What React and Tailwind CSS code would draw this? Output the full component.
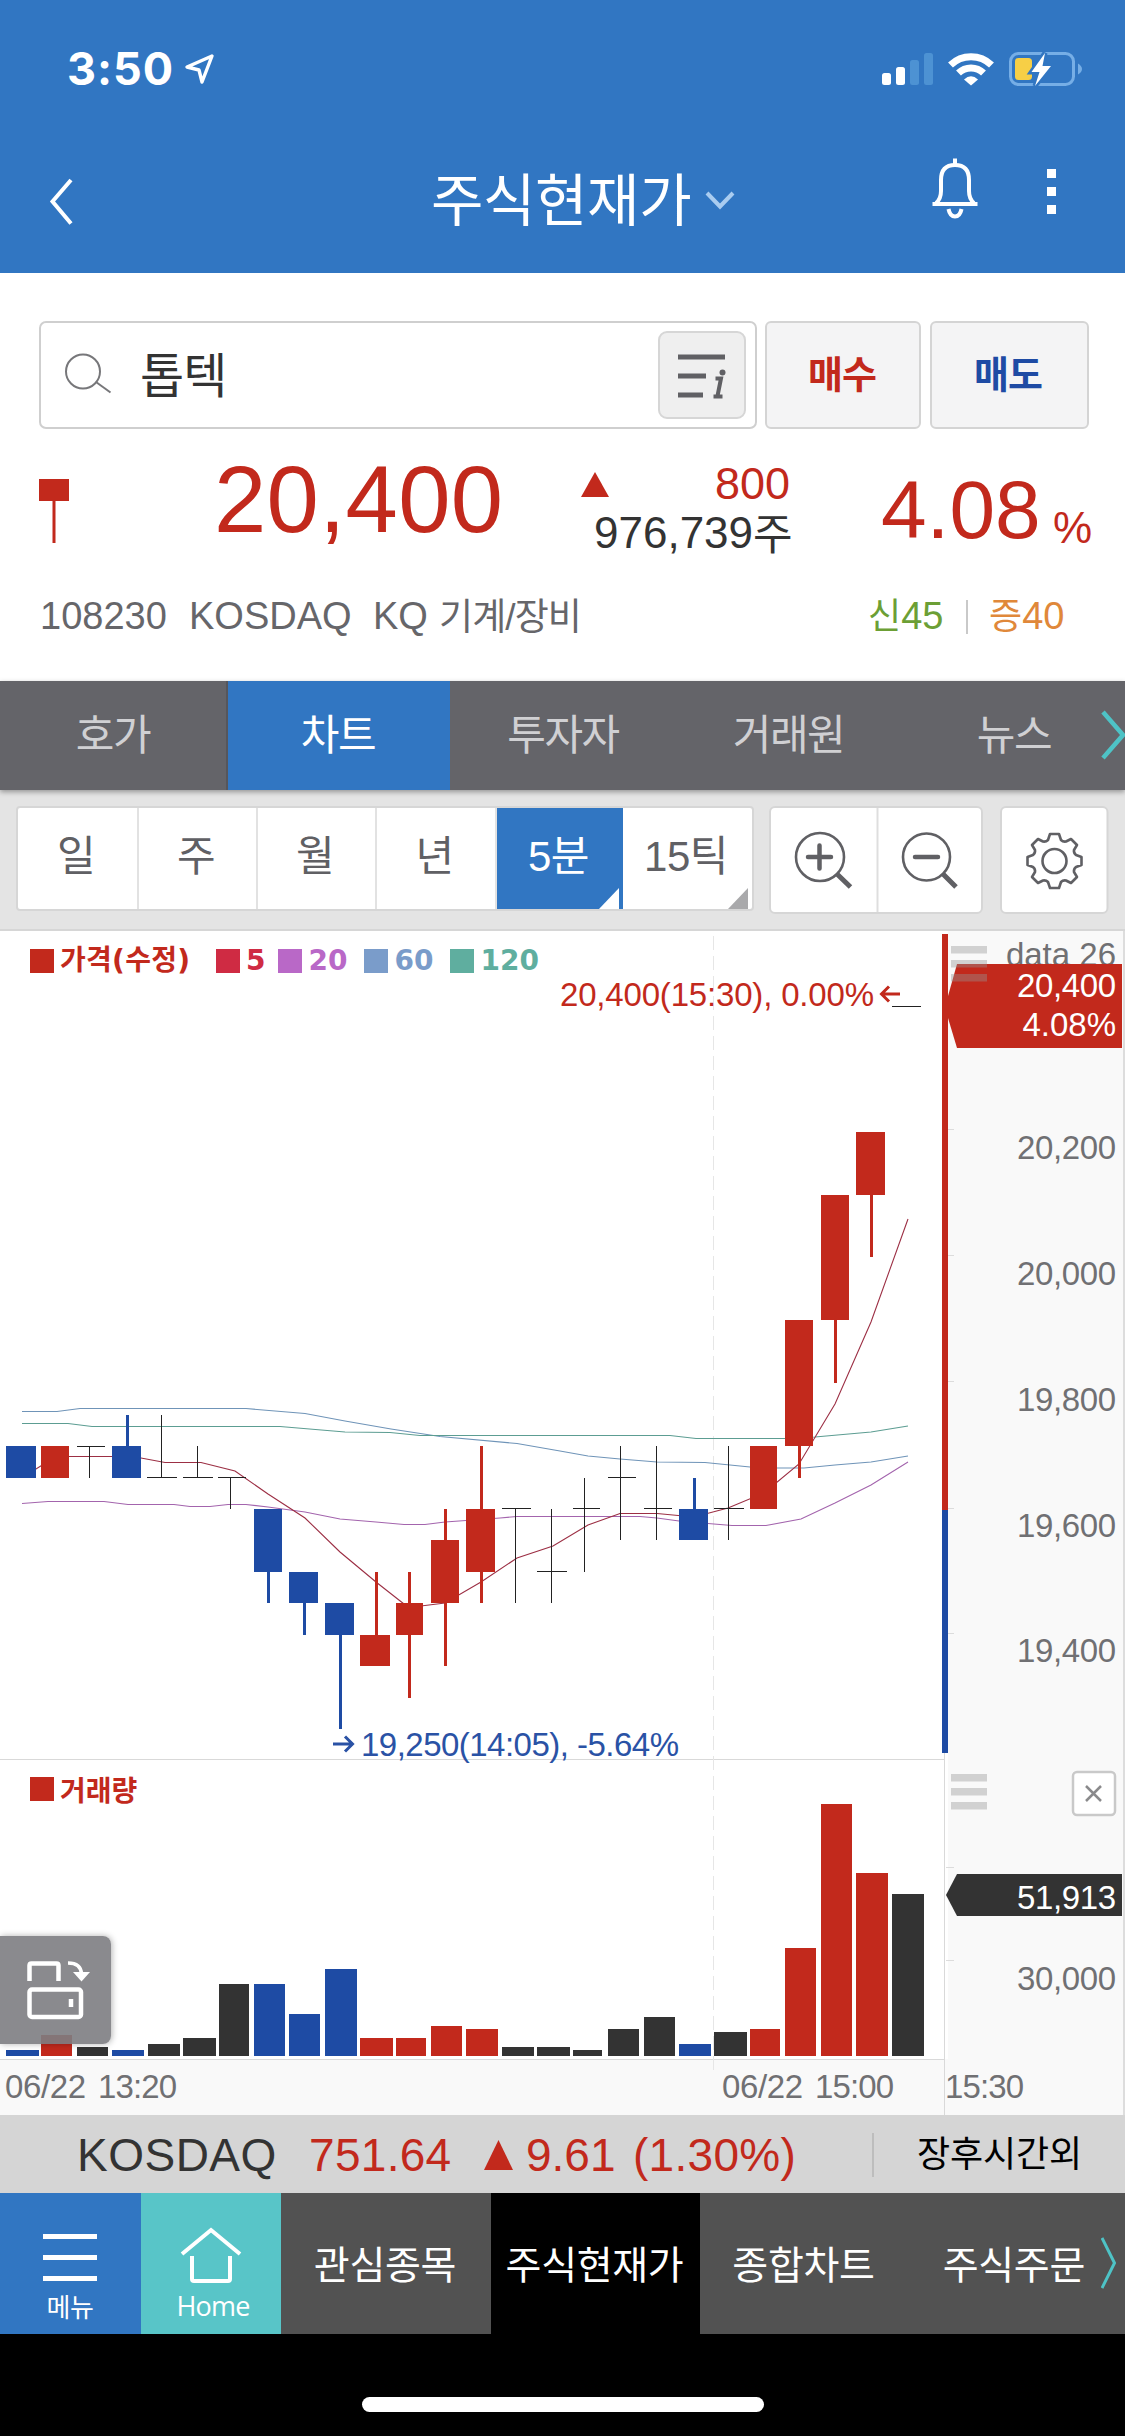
const RED = "#c2291c"
const BLUE = "#1e4ba4"
const BLACK = "#333333"

const periods = [
  { label: "일", width: "w-[121px]" },
  { label: "주", width: "w-[119px]" },
  { label: "월", width: "w-[119px]" },
  { label: "년", width: "w-[120px]" },
  { label: "5분", width: "w-[126px]", active: true },
  { label: "15틱", width: "w-[129px]", corner: true },
]

// x1, x2, body top, body bottom, wick x, wick top, wick bottom
const candles = [
  { c: BLUE, x1: 6, x2: 36, t: 1446, b: 1478 },
  { c: RED, x1: 41, x2: 69, t: 1446, b: 1478 },
  { c: BLUE, x1: 112, x2: 141, t: 1446, b: 1478, w: [127.5, 1415, 1446] },
  { c: BLUE, x1: 254, x2: 282, t: 1509, b: 1572, w: [268.5, 1572, 1603] },
  { c: BLUE, x1: 289, x2: 318, t: 1572, b: 1603, w: [304.5, 1603, 1635] },
  { c: BLUE, x1: 325, x2: 354, t: 1603, b: 1635, w: [340.5, 1635, 1729] },
  { c: RED, x1: 360, x2: 390, t: 1635, b: 1666, w: [376.5, 1572, 1635] },
  { c: RED, x1: 396, x2: 423, t: 1603, b: 1635, w: [409.5, 1572, 1698] },
  { c: RED, x1: 431, x2: 459, t: 1540, b: 1603, w: [445.5, 1509, 1666] },
  { c: RED, x1: 466, x2: 495, t: 1509, b: 1572, w: [481.5, 1446, 1603] },
  { c: BLUE, x1: 679, x2: 708, t: 1509, b: 1540, w: [694.5, 1478, 1509] },
  { c: RED, x1: 750, x2: 777, t: 1446, b: 1509 },
  { c: RED, x1: 785, x2: 813, t: 1320, b: 1446, w: [799.5, 1446, 1478] },
  { c: RED, x1: 821, x2: 849, t: 1195, b: 1320, w: [835.5, 1320, 1383] },
  { c: RED, x1: 856, x2: 885, t: 1132, b: 1195, w: [871.5, 1195, 1257] },
]

// x1, x2, y of the bar, wick x, wick top, wick bottom
const dojis = [
  [77, 105, 1446.5, 89.5, 1446, 1478],
  [147, 177, 1477.5, 161.5, 1415, 1478],
  [183, 213, 1477.5, 197.5, 1446, 1478],
  [218, 246, 1477.5, 230.5, 1477, 1509],
  [502, 531, 1508.5, 515.5, 1508, 1603],
  [537, 567, 1571.5, 551.5, 1509, 1603],
  [573, 600, 1508.5, 584.5, 1478, 1572],
  [608, 636, 1477.5, 620.5, 1446, 1540],
  [644, 672, 1508.5, 656.5, 1446, 1540],
  [714, 744, 1508.5, 728.5, 1446, 1540],
]

const volumes = [
  [6, 39, 2050, BLUE], [41, 72, 2035, RED], [77, 108, 2047, BLACK],
  [112, 144, 2050, BLUE], [148, 180, 2044, BLACK], [183, 216, 2038, BLACK],
  [219, 249, 1984, BLACK], [254, 285, 1984, BLUE], [289, 320, 2014, BLUE],
  [325, 357, 1969, BLUE], [360, 393, 2038, RED], [396, 426, 2038, RED],
  [431, 462, 2026, RED], [466, 498, 2029, RED], [502, 534, 2047, BLACK],
  [537, 570, 2047, BLACK], [573, 602, 2050, BLACK], [608, 639, 2029, BLACK],
  [644, 675, 2017, BLACK], [679, 711, 2044, BLUE], [714, 747, 2032, BLACK],
  [750, 780, 2029, RED], [785, 816, 1948, RED], [821, 852, 1804, RED],
  [856, 888, 1873, RED], [892, 924, 1894, BLACK],
]

const averages = [
  {
    color: "#6f94b8",
    points: "22,1411.5 57,1411.5 80,1408.5 246,1408.5 305,1413.5 345,1421 391,1429 440,1436.5 517,1443.5 560,1451 588,1456 620,1459 657,1462 705,1462.5 750,1467 777,1468 804,1468 835,1465 871,1462 908,1456",
  },
  {
    color: "#5c9d92",
    points: "22,1423.5 68,1423.5 92,1426.5 280,1426.5 345,1432 390,1432.5 420,1435.5 670,1435.5 696,1438.5 785,1438.5 815,1437 871,1432 908,1426",
  },
  {
    color: "#a364ad",
    points: "22,1503.5 48,1501.5 104,1501.5 128,1504.5 174,1504.5 190,1506.5 210,1506.5 228,1504.5 246,1504.5 268,1507 305,1512 340,1519 376,1522 404,1524.5 425,1524.5 445,1522 466,1520.5 500,1518 517,1516.5 640,1516.5 657,1518 679,1521 708,1523.5 732,1525.5 766,1525.5 801,1519 835,1503 871,1485 908,1462",
  },
  {
    color: "#9c2f44",
    points: "22,1474 36,1469 55,1457 69,1456.5 112,1456.5 141,1458 165,1462.5 201,1462.5 235,1471 268,1494 305,1518 340,1552 376,1582 404,1604 409,1607.5 445,1603 481,1582 517,1558 553,1546 588,1525 620,1513.5 657,1513.5 694,1517 728,1508 764,1493 799,1464 835,1404 871,1322 908,1219",
  },
]

const priceTicks = [
  ["20,200", 1129.5, 1159],
  ["20,000", 1255.5, 1285],
  ["19,800", 1381.5, 1411],
  ["19,600", 1508.5, 1537],
  ["19,400", 1633.5, 1662],
]

const legend = [
  { label: "5", box: "bg-[#cf2b43]", text: "text-[#cf2b43]", gap: "ml-[28px]" },
  { label: "20", box: "bg-[#b968c7]", text: "text-[#b968c7]", gap: "ml-[13px]" },
  { label: "60", box: "bg-[#7a9cca]", text: "text-[#7a9cca]", gap: "ml-[17px]" },
  { label: "120", box: "bg-[#5fae9f]", text: "text-[#5fae9f]", gap: "ml-[17px]" },
]

function StatusBar() {
  return (
    <div className="flex h-[137px] pl-[67px]">
      <span className="mt-[46px] w-[116px] font-['Inter'] text-[45px] leading-none font-bold tracking-[1px]">
        3:50
      </span>
      <svg className="mt-[52px]" width="34" height="34" viewBox="183 52 34 34" fill="none"
        stroke="#fff" strokeWidth="3.4" strokeLinejoin="round">
        <path d="M212 56 L187 67 L199 70 L202 82 Z" />
      </svg>
      <svg className="mt-[48px] ml-[661px]" width="212" height="42" viewBox="878 48 212 42">
        <g fill="#fff">
          <rect x="882" y="73" width="9" height="12" rx="2.5" />
          <rect x="896" y="67" width="9" height="18" rx="2.5" />
        </g>
        <g fill="#4d92d3">
          <rect x="910" y="60" width="9" height="25" rx="2.5" />
          <rect x="924" y="53" width="9" height="32" rx="2.5" />
        </g>
        {/* Wifi */}
        <g fill="none" stroke="#fff" strokeWidth="7">
          <path d="M950.5 65 A29.5 29.5 0 0 1 991.5 65" />
          <path d="M958.5 73 A18 18 0 0 1 983.5 73" />
        </g>
        <path d="M964 79.5 Q971 73 978 79.5 L971 85.5 Z" fill="#fff" />
        {/* Battery */}
        <rect x="1010.5" y="53.5" width="63" height="31" rx="8" fill="none" stroke="#76aee6" strokeWidth="3" />
        <path d="M1078 63.5 Q1082 66 1082 69 Q1082 72 1078 74.5 Z" fill="#76aee6" />
        <rect x="1015" y="58" width="17" height="22" rx="3.5" fill="#f7cf46" />
        <path d="M1045 53 L1031.500 72 L1039.500 72 L1035 86 L1051 66 L1042.500 66 Z"
          fill="#fff" stroke="#3176c2" strokeWidth="5" paintOrder="stroke" />
      </svg>
    </div>
  )
}

function Header() {
  return (
    <header className="h-[273px] bg-[#3176c2] text-white">
      <StatusBar />
      <div className="flex h-[136px] pl-[48px]">
        <svg className="mt-[39px]" width="28" height="52" viewBox="48 176 28 52" fill="none"
          stroke="#fff" strokeWidth="4">
          <path d="M71 180 L52.500 201.500 L71 223.500" />
        </svg>
        <h1 className="mt-[36px] ml-[355px] w-[272px] text-[57px] leading-none whitespace-nowrap tracking-[-0.4px]">
          주식현재가
        </h1>
        <svg className="mt-[52px]" width="34" height="24" viewBox="703 189 34 24" fill="none"
          stroke="#a9ccf0" strokeWidth="4">
          <path d="M707 193 L720 206.500 L733 193" />
        </svg>
        <svg className="mt-[19px] ml-[191px]" width="52" height="66" viewBox="928 156 52 66" fill="none"
          stroke="#fff" strokeWidth="4">
          <path d="M955 158.500 V165" />
          <path d="M936 203 Q941 199 941 191 V180 Q941 165 955 165 Q969 165 969 180 V191 Q969 199 974 203" />
          <path d="M932.500 204 H977.500" />
          <path d="M948.500 209 Q950 216.500 955 216.500 Q960 216.500 961.500 209" />
        </svg>
        <div className="mt-[32px] ml-[67px] flex flex-col gap-[9px]">
          <span className="size-[9px] bg-white" />
          <span className="size-[9px] bg-white" />
          <span className="size-[9px] bg-white" />
        </div>
      </div>
    </header>
  )
}

function SearchRow() {
  return (
    <div className="flex h-[156px] items-end pl-[39px]">
      <div className="flex h-[108px] w-[718px] items-center rounded-[7px] border-2 border-[#cfcfcf] pr-[9px] pl-[22px]">
        <svg width="52" height="50" viewBox="63 350 52 50" fill="none" stroke="#77777a" strokeWidth="2">
          <circle cx="83" cy="371.500" r="17" />
          <path d="M96 382 L110.500 392.500" />
        </svg>
        <span className="mt-[3px] ml-[25px] flex-1 text-[48px] leading-none tracking-[-1px] text-[#333]">톱텍</span>
        <span className="flex size-[88px] items-center justify-center rounded-[9px] border-2 border-[#d6d6d6] bg-[#efefef]">
          <svg width="52" height="50" viewBox="676 350 52 50" stroke="#606064" strokeWidth="5" fill="none">
            <path d="M678 357 H725 M678 376 H706 M678 395 H703" />
            <path d="M715.500 378.500 H721 L717.500 396 M713.500 396.500 H722.500" strokeWidth="4" />
            <circle cx="722.500" cy="372.500" r="3" fill="#606064" stroke="none" />
          </svg>
        </span>
      </div>
      <button className="ml-[8px] h-[108px] w-[156px] rounded-[6px] border-2 border-[#d4d4d4] bg-[#f4f4f5] pr-[2px] text-[38px] leading-none font-bold tracking-[-1px] text-[#c2291c]">
        매수
      </button>
      <button className="ml-[9px] h-[108px] w-[159px] rounded-[6px] border-2 border-[#d4d4d4] bg-[#f4f4f5] pr-[3px] text-[38px] leading-none font-bold tracking-[-1px] text-[#1e4ba4]">
        매도
      </button>
    </div>
  )
}

function Quote() {
  return (
    <div className="h-[252px] leading-none whitespace-nowrap">
      <div className="flex h-[165px] pl-[39px] text-[#c2291c]">
        <svg className="mt-[50px]" width="30" height="66" fill={RED}>
          <rect width="30" height="22" />
          <rect x="13.500" y="22" width="3" height="42" />
        </svg>
        <span className="mt-[24px] ml-[145px] w-[290px] text-[94px] tracking-[0.3px]">20,400</span>
        <div className="ml-[77px] w-[215px] pt-[32px]">
          <div className="flex justify-between pr-[6px]">
            <svg className="mt-[11px]" width="28" height="26" fill={RED}>
              <path d="M14 0 L28 25 H0 Z" />
            </svg>
            <span className="text-[45px]">800</span>
          </div>
          <div className="mt-[5px] ml-[13px] flex text-[44px] text-[#333]">
            <span>976,739</span>
            <span className="mt-[3px] text-[43px]">주</span>
          </div>
        </div>
        <span className="mt-[40px] ml-[85px] w-[172px] text-[82px]">4.08</span>
        <span className="mt-[77px] text-[44px]">%</span>
      </div>
      <div className="flex pl-[40px] text-[38px] text-[#66666a]">
        <span className="mt-[3px] w-[149px]">108230</span>
        <span className="mt-[3px] w-[184px]">KOSDAQ</span>
        <span className="mt-[3px] w-[66px]">KQ</span>
        <span className="mt-[5px] w-[429px] text-[37px] tracking-[-0.9px]">기계/장비</span>
        <span className="mt-[3px] flex w-[98px] text-[#6c9f35]">
          <span className="mt-[2px] text-[36px]">신</span><span>45</span>
        </span>
        <span className="mt-[6px] h-[34px] w-[2px] bg-[#c9c9c9]" />
        <span className="mt-[3px] ml-[21px] flex text-[#e0883a]">
          <span className="mt-[2px] text-[36px]">증</span><span>40</span>
        </span>
      </div>
    </div>
  )
}

function Tabs() {
  return (
    <nav className="relative flex h-[109px] bg-[#646469] text-[42px] leading-none tracking-[-1.5px] text-[#d0d0d3] shadow-[0_2px_5px_rgba(0,0,0,0.35)]">
      <span className="flex w-[228px] items-center justify-center border-r-2 border-[#56565b]">호가</span>
      <span className="flex w-[222px] items-center justify-center bg-[#3176c2] pr-[2px] text-white">차트</span>
      <span className="flex w-[226px] items-center justify-center">투자자</span>
      <span className="flex w-[225px] items-center justify-center">거래원</span>
      <span className="flex w-[200px] items-center justify-center pl-[26px]">뉴스</span>
      <svg className="mt-[28px] shrink-0" width="24" height="52" viewBox="1101 709 24 52" fill="none"
        stroke="#4ec3c6" strokeWidth="4.500">
        <path d="M1103 712 L1123 735 L1103 758" />
      </svg>
    </nav>
  )
}

function Toolbar() {
  return (
    <div className="flex h-[141px] border-b-2 border-[#d6d6d6] bg-[#e4e4e4] pt-[16px] pl-[16px] text-[#606064]">
      <div className="flex h-[105px] w-[738px] rounded-[4px] border-2 border-[#d6d6d6] bg-white text-[42px] leading-none tracking-[-0.5px]">
        {periods.map((p) => (
          <span
            key={p.label}
            className={`relative flex items-center justify-center pr-[3px] pb-[3px] ${p.width} ${
              p.active ? "bg-[#3176c2] text-white" : "border-r-2 border-[#e2e2e2] last:border-r-0"
            }`}
          >
            {p.label}
            {(p.active || p.corner) && (
              <svg className="absolute right-[4px] bottom-0" width="20" height="21">
                <path d="M20 0 V21 H0 Z" fill={p.active ? "#fff" : "#a9a9ab"} />
              </svg>
            )}
          </span>
        ))}
      </div>
      <svg className="mt-[-1px] ml-[14px]" width="216" height="112" viewBox="768 805 216 112" fill="none" stroke="#606064">
        <rect x="770" y="807" width="212" height="106" rx="5" fill="#fff" stroke="#d6d6d6" strokeWidth="2" />
        <path d="M877.500 808 V912" stroke="#dedede" strokeWidth="2" />
        <g strokeWidth="2.600">
          <circle cx="820" cy="857" r="24" />
          <circle cx="926.500" cy="857" r="23.500" />
        </g>
        <path d="M837 874 L850.500 887 M943 874 L956 887" strokeWidth="5" />
        <path d="M808 857 H831 M819.500 845.500 V868.500 M915 857 H938" strokeWidth="4.500" strokeLinecap="round" />
      </svg>
      <svg className="mt-[-1px] ml-[16px]" width="110" height="112" viewBox="1000 805 110 112" fill="none" stroke="#606064">
        <rect x="1001" y="807" width="106.500" height="106" rx="5" fill="#fff" stroke="#d6d6d6" strokeWidth="2" />
        <circle cx="1054.500" cy="861" r="12" strokeWidth="2.600" />
        <path strokeWidth="2.600" strokeLinejoin="round"
          d="M1050 834 H1059 L1061 840 Q1063 842 1066 841.500 L1071 839 L1077 845 L1074 850 Q1073.500 853 1076 855 L1081.500 857 V865 L1076 867 Q1073.500 869 1074 872 L1077 877 L1071 883 L1066 880.500 Q1063 880 1061 882 L1059 888 H1050 L1048 882 Q1046 880 1043 880.500 L1038 883 L1032 877 L1035 872 Q1035.500 869 1033 867 L1027.500 865 V857 L1033 855 Q1035.500 853 1035 850 L1032 845 L1038 839 L1043 841.500 Q1046 842 1048 840 Z" />
      </svg>
    </div>
  )
}

function Legend() {
  return (
    <div className="absolute top-[17px] left-[30px] flex h-[26px] items-center font-['DejaVu_Sans','Noto_Sans_CJK_KR',sans-serif] text-[28px] leading-none font-bold">
      <span className="size-[24px] bg-[#c2291c]" />
      <span className="ml-[6px] w-[128px] text-[28px] tracking-[0.3px] whitespace-nowrap text-[#c2291c]">가격(수정)</span>
      {legend.map((item) => (
        <span key={item.label} className={`flex items-center ${item.gap} ${item.text}`}>
          <span className={`mr-[6px] size-[24px] ${item.box}`} />
          {item.label}
        </span>
      ))}
    </div>
  )
}

function Chart() {
  return (
    <section className="relative h-[1184px]">
      <svg className="block" width="1125" height="1184" viewBox="0 931 1125 1184"
        fontFamily="'Liberation Sans', sans-serif" fontSize="33">
        {/* Backgrounds and frame */}
        <rect x="948" y="931" width="177" height="1184" fill="#f9f9f9" />
        <rect x="0" y="2059" width="948" height="56" fill="#f9f9f9" />
        <path d="M1124 931 V2115" stroke="#dddddd" strokeWidth="2" />
        <path d="M0 1759.500 H944 M944.500 1753 V2115 M0 2059.500 H944" stroke="#d9d9d9" />
        <path d="M713.500 936 V2070" stroke="#e6e6e6" strokeDasharray="14 6" />

        {/* Price */}
        {averages.map((a) => (
          <polyline key={a.color} points={a.points} fill="none" stroke={a.color} strokeWidth="1.100" />
        ))}
        {candles.map((k) => (
          <g key={k.x1} fill={k.c}>
            <rect x={k.x1} y={k.t} width={k.x2 - k.x1} height={k.b - k.t} />
            {k.w && <rect x={k.w[0] - 1.5} y={k.w[1]} width="3" height={k.w[2] - k.w[1]} />}
          </g>
        ))}
        {dojis.map(([x1, x2, y, x, top, bottom]) => (
          <path key={x1} d={`M${x1} ${y} H${x2} M${x} ${top} V${bottom}`} stroke="#222" />
        ))}
        <g fill={RED}>
          <text x="560" y="1006" textLength="314">20,400(15:30), 0.00%</text>
          <path d="M900 994 H882 M889 986.500 L881.500 994 L889 1001.500" fill="none" stroke={RED} strokeWidth="3" />
        </g>
        <path d="M892 1006.500 H921" stroke="#222" />
        <g fill="#2a52a5">
          <text x="361" y="1756" textLength="318">19,250(14:05), -5.64%</text>
          <path d="M333 1744 H351 M345 1736.500 L352.500 1744 L345 1751.500" fill="none" stroke="#2a52a5" strokeWidth="3" />
        </g>

        {/* Price axis */}
        <rect x="942" y="934" width="6" height="576" fill={RED} />
        <rect x="942" y="1510" width="6" height="243" fill={BLUE} />
        <g fill="#707073" textAnchor="end">
          {priceTicks.map(([label, tick, base]) => (
            <g key={label}>
              <path d={`M948 ${tick} H954`} stroke="#dcdcdc" />
              <text x="1116" y={base} textLength="99">{label}</text>
            </g>
          ))}
          <text x="1116" y="966">data 26</text>
        </g>
        <path d="M957 964 H1122 V1048 H957 L948 1018 V996 Z" fill={RED} />
        <g fill="#fff" textAnchor="end">
          <text x="1116" y="997" textLength="99">20,400</text>
          <text x="1116" y="1036">4.08%</text>
        </g>
        <g fill="#969696" fillOpacity="0.400">
          <rect x="951" y="946" width="36" height="7.500" />
          <rect x="951" y="960" width="36" height="7.500" />
          <rect x="951" y="974" width="36" height="7.500" />
        </g>

        {/* Volume */}
        {volumes.map(([x1, x2, top, color]) => (
          <rect key={x1} x={x1} y={top} width={x2 - x1} height={2056 - top} fill={color} />
        ))}
        <g fill="#969696" fillOpacity="0.400">
          <rect x="951" y="1774" width="36" height="7.500" />
          <rect x="951" y="1788" width="36" height="7.500" />
          <rect x="951" y="1802" width="36" height="7.500" />
        </g>
        <rect x="1073" y="1772" width="42" height="43" rx="4" fill="#fff" stroke="#c9c9c9" strokeWidth="2.500" />
        <path d="M1086 1786 L1101 1801 M1101 1786 L1086 1801" stroke="#8a8a8c" strokeWidth="2.500" />
        <path d="M946 1867.500 H954 M946 1960.500 H954" stroke="#dcdcdc" />
        <text x="1116" y="1897" textAnchor="end" fill="#707073" textLength="99">60,000</text>
        <path d="M957 1874 H1122 V1916 H957 L946 1895 Z" fill={BLACK} />
        <text x="1116" y="1909" textAnchor="end" fill="#fff" textLength="99">51,913</text>
        <g fill="#707073">
          <text x="1116" y="1990" textAnchor="end" textLength="99">30,000</text>
          <text x="5" y="2098" textLength="81">06/22</text>
          <text x="98" y="2098" textLength="79">13:20</text>
          <text x="722" y="2098" textLength="81">06/22</text>
          <text x="815" y="2098" textLength="79">15:00</text>
          <text x="945" y="2098" textLength="79">15:30</text>
        </g>
      </svg>

      <Legend />
      <div className="absolute top-[845px] left-[30px] flex h-[26px] items-center font-['Noto_Sans_CJK_KR',sans-serif] text-[28px] leading-none font-bold text-[#c2291c]">
        <span className="mr-[6px] size-[24px] bg-[#c2291c]" />
        거래량
      </div>

      {/* Rotate button */}
      <button className="absolute top-[1005px] left-0 h-[108px] w-[111px] rounded-r-[8px] bg-[#7d7d82]/90 shadow-[1px_0_6px_rgba(0,0,0,0.3)]">
        <svg width="111" height="108" viewBox="0 1936 111 108" fill="none" stroke="#fff" strokeWidth="4.500">
          <path d="M29.500 1981 V1965.500 Q29.500 1963.500 31.500 1963.500 H56.500 Q58.500 1963.500 58.500 1965.500 V1981" />
          <rect x="29.500" y="1989.500" width="51.500" height="27.500" rx="2.500" />
          <path d="M71 1999 V2007" />
          <path d="M68 1963 Q81 1963 81.500 1974" strokeWidth="3.500" />
          <path d="M73 1972 H90 L81.500 1981.500 Z" fill="#fff" stroke="none" />
        </svg>
      </button>
    </section>
  )
}

function Ticker() {
  return (
    <div className="flex h-[78px] items-center bg-[#d5d5d5] pt-px pl-[77px] text-[46px] leading-none whitespace-nowrap text-[#c2291c]">
      <span className="w-[232px] tracking-[0.5px] text-[#333]">KOSDAQ</span>
      <span className="w-[175px] tracking-[0.3px]">751.64</span>
      <svg className="mr-[13px]" width="29" height="30" fill={RED}>
        <path d="M14.500 0 L29 30 H0 Z" />
      </svg>
      <span className="w-[107px]">9.61</span>
      <span className="w-[239px] tracking-[0.3px]">(1.30%)</span>
      <span className="h-[44px] w-[2px] bg-[#bdbdbd]" />
      <span className="ml-[43px] text-[36px] tracking-[-0.1px] text-black">장후시간외</span>
    </div>
  )
}

function BottomNav() {
  return (
    <nav className="flex h-[141px] bg-[#525252] text-[39px] leading-none tracking-[-0.3px] whitespace-nowrap text-white">
      <div className="flex w-[141px] flex-col items-center bg-[#3176c2] pt-[41px] pr-px">
        <div className="flex flex-col gap-[16px]">
          <span className="h-[5px] w-[54px] bg-white" />
          <span className="h-[5px] w-[54px] bg-white" />
          <span className="h-[5px] w-[54px] bg-white" />
        </div>
        <span className="mt-[14px] text-[26px]">메뉴</span>
      </div>
      <div className="flex w-[140px] flex-col items-center bg-[#58c5c8] pt-[33px]">
        <svg width="64" height="60" viewBox="180 2226 64 60" fill="none" stroke="#fff" strokeWidth="4">
          <path d="M183 2254 L212 2230 L241 2254" />
          <path d="M193 2256 V2279 Q193 2281 195 2281 H229 Q231 2281 231 2279 V2256" />
        </svg>
        <span className="mt-[6px] ml-[4px] font-['Open_Sans',sans-serif] text-[27px] tracking-[-0.8px]">Home</span>
      </div>
      <span className="flex w-[210px] items-center justify-center pt-[4px] pr-[2px]">관심종목</span>
      <span className="flex w-[209px] items-center justify-center bg-black pt-[4px] pr-[2px]">주식현재가</span>
      <span className="flex w-[209px] items-center justify-center pt-[4px] pr-[2px]">종합차트</span>
      <span className="flex w-[192px] items-center justify-end pt-[4px] pr-[16px]">주식주문</span>
      <svg className="mt-[43px]" width="16" height="54" viewBox="1101 2236 16 54" fill="none"
        stroke="#4ec3c6" strokeWidth="3">
        <path d="M1102 2238 L1114.500 2263 L1102 2288" />
      </svg>
    </nav>
  )
}

function App() {
  return (
    <div className="h-[2436px] w-[1125px] overflow-hidden bg-black font-['Liberation_Sans','Noto_Sans_CJK_KR',sans-serif]">
      <Header />
      <div className="bg-white">
        <SearchRow />
        <Quote />
      </div>
      <Tabs />
      <Toolbar />
      <div className="bg-white">
        <Chart />
      </div>
      <Ticker />
      <BottomNav />
      {/* Home indicator */}
      <div className="flex justify-center pt-[63px]">
        <span className="h-[15px] w-[402px] rounded-full bg-white" />
      </div>
    </div>
  )
}

export default App
